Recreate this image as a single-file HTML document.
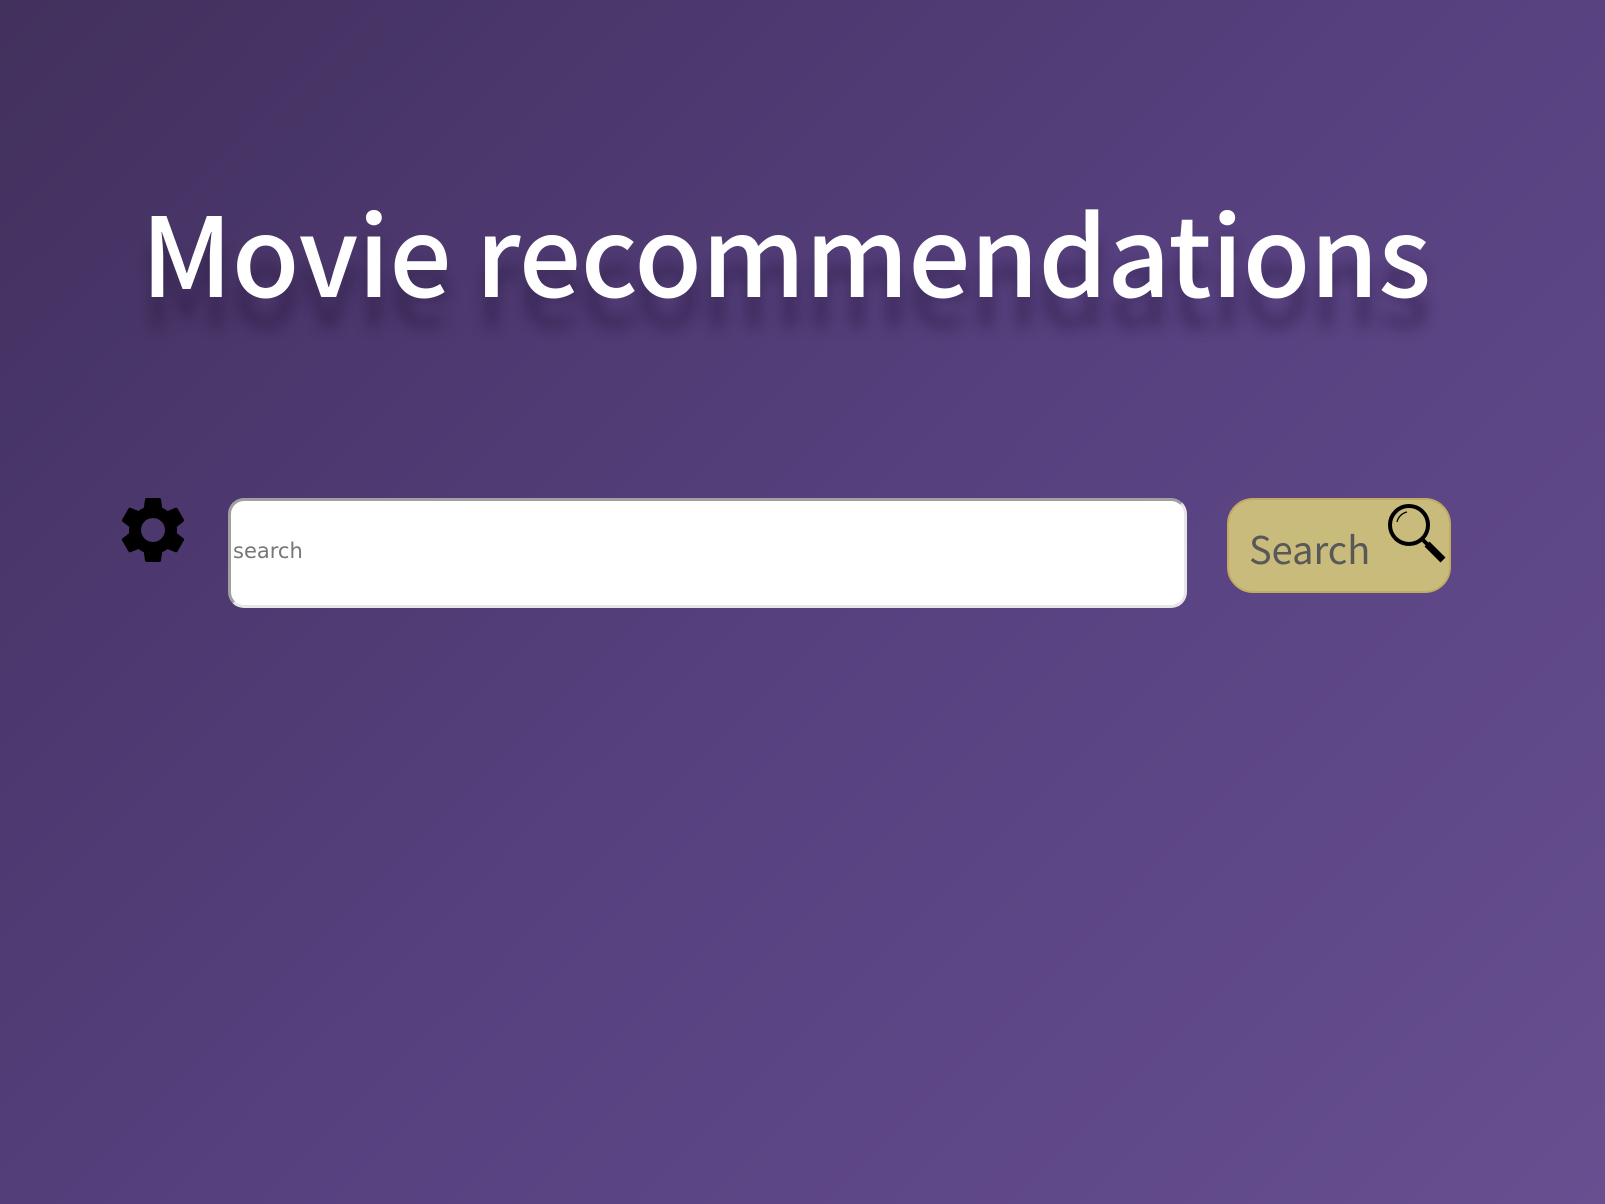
<!DOCTYPE html>
<html><head><meta charset="utf-8"><style>
html,body{margin:0;padding:0;width:1605px;height:1204px;overflow:hidden}
body{background:linear-gradient(135deg,#42305d 0%,#56407e 50%,#674f90 100%);font-family:"Noto Sans CJK JP","Liberation Sans",sans-serif;position:relative}
h1{position:absolute;left:141px;top:178px;margin:0;font-size:110px;font-weight:500;color:#fff;white-space:nowrap;letter-spacing:-0.4px;line-height:1.3;text-shadow:0 30px 14px rgba(30,15,50,0.38)}
.gear{position:absolute;left:113px;top:490px;width:80px;height:80px}
.inp{position:absolute;left:228px;top:498px;width:959px;height:110px;box-sizing:border-box;background:#fff;border-radius:16px;border:3px solid #a0a0a0;border-right-color:#e6e6e6;border-bottom-color:#e6e6e6}
.ph{position:absolute;left:2px;top:38px;font-family:"DejaVu Sans",sans-serif;font-size:21px;color:#777}
.btn{position:absolute;left:1227px;top:498px;width:224px;height:95px;box-sizing:border-box;background:#c8bb7b;border:2px solid #c3aa62;border-radius:26px}
.btn span{position:absolute;left:20px;top:20px;font-size:38px;color:#585858}
.mag{position:absolute;left:1384px;top:502px;width:66px;height:66px}
</style></head><body>
<h1>Movie recommendations</h1>
<svg class="gear" viewBox="0 0 24 24"><path fill="#000" d="M19.14 12.94c.04-.3.06-.61.06-.94 0-.32-.02-.64-.07-.94l2.03-1.580a.49.49 0 0 0 .12-.61l-1.92-3.32a.49.49 0 0 0-.59-.22l-2.39.96c-.5-.38-1.030-.7-1.620-.94l-.36-2.54a.48.48 0 0 0-.48-.41h-3.84c-.24 0-.43.17-.47.41l-.36 2.54c-.59.24-1.13.57-1.62.94l-2.39-.96a.49.49 0 0 0-.59.22L2.74 8.87a.47.47 0 0 0 .12.61l2.03 1.58c-.05.3-.09.63-.09.94s.02.64.07.94l-2.03 1.58a.49.49 0 0 0-.12.61l1.92 3.32c.12.22.37.29.59.22l2.39-.96c.5.38 1.03.7 1.62.94l.36 2.54c.05.24.24.41.48.41h3.84c.24 0 .44-.17.47-.41l.36-2.54c.59-.24 1.13-.56 1.62-.94l2.39.96c.22.08.47 0 .59-.22l1.92-3.32a.47.47 0 0 0-.12-.61l-2.01-1.58zM12 15.6A3.6 3.6 0 1 1 12 8.4a3.6 3.6 0 0 1 0 7.2z"/></svg>
<div class="inp"><div class="ph">search</div></div>
<div class="btn"><span>Search</span></div>
<svg class="mag" viewBox="0 0 66 66"><circle cx="25" cy="23" r="19" fill="none" stroke="#000" stroke-width="4"/><path d="M13 20a13 13 0 0 1 10-10" stroke="#000" stroke-width="1.3" fill="none"/><line x1="38" y1="37" x2="44" y2="43" stroke="#000" stroke-width="4"/><line x1="43" y1="42" x2="59" y2="58" stroke="#000" stroke-width="7"/></svg>
</body></html>
